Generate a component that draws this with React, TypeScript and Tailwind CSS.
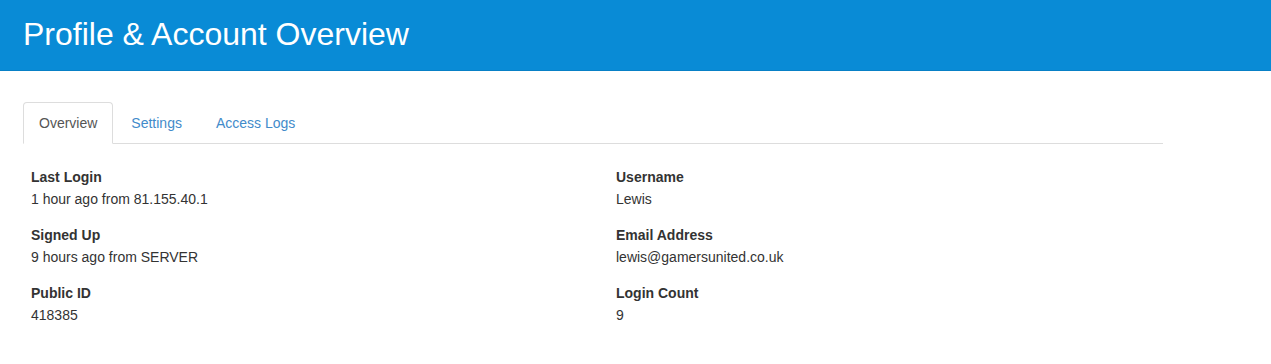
import React from "react";

const left = [
  { label: "Last Login", value: "1 hour ago from 81.155.40.1" },
  { label: "Signed Up", value: "9 hours ago from SERVER" },
  { label: "Public ID", value: "418385" },
];

const right = [
  { label: "Username", value: "Lewis" },
  { label: "Email Address", value: "lewis@gamersunited.co.uk" },
  { label: "Login Count", value: "9" },
];

function Field({ label, value }: { label: string; value: string }) {
  return (
    <div>
      <div className="font-bold leading-[20px]">{label}</div>
      <div className="mt-[2px] leading-[20px]">{value}</div>
    </div>
  );
}

export default function App() {
  return (
    <div className="min-h-screen bg-white text-[14px] text-[#333] font-['Liberation_Sans',Arial,sans-serif]">
      {/* Header */}
      <div className="h-[71px] bg-[#098bd6] border-b border-[#0880c6] flex items-center px-[24px]">
        <h1 className="text-[32px] leading-none text-white pb-[2px] -ml-px">Profile &amp; Account Overview</h1>
      </div>

      <div className="px-[23px] pt-[31px] w-[1186px]">
        {/* Tabs */}
        <ul className="flex border-b border-[#ddd]">
          <li className="-mb-px mr-[2px]">
            <span className="block px-[15px] py-[10px] leading-[20px] bg-white border border-[#ddd] border-b-transparent rounded-t-[4px] text-[#555]">
              Overview
            </span>
          </li>
          <li className="-mb-px mr-[2px]">
            <span className="block px-[15px] py-[10px] leading-[20px] border border-transparent text-[#428bca]">
              Settings
            </span>
          </li>
          <li className="-mb-px mr-[2px]">
            <span className="block px-[15px] py-[10px] leading-[20px] border border-transparent text-[#428bca]">
              Access Logs
            </span>
          </li>
        </ul>

        {/* Fields */}
        <div className="grid grid-cols-[585px_1fr] pl-[8px] pt-[23px]">
          <div className="flex flex-col gap-[16px]">
            {left.map((f) => (
              <Field key={f.label} {...f} />
            ))}
          </div>
          <div className="flex flex-col gap-[16px]">
            {right.map((f) => (
              <Field key={f.label} {...f} />
            ))}
          </div>
        </div>
      </div>
    </div>
  );
}
